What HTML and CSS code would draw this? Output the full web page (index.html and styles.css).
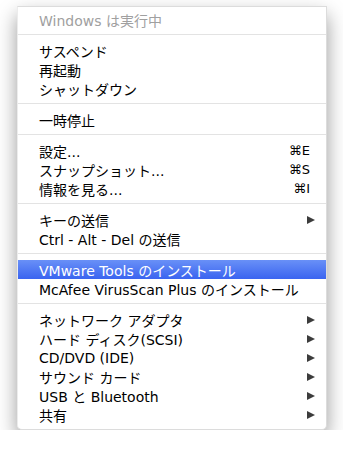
FILE: index.html
```html
<!DOCTYPE html>
<html lang="ja">

<head>
  <meta charset="UTF-8">
  <meta name="viewport" content="width=device-width, initial-scale=1.0">
  <title>Menu</title>
  <link rel="stylesheet" href="styles.css">
</head>

<body>
  <ul class="menu">
    <li class="item head">Windows は実行中</li>
    <li class="sep"></li>
    <li class="item">サスペンド</li>
    <li class="item">再起動</li>
    <li class="item">シャットダウン</li>
    <li class="sep"></li>
    <li class="item">一時停止</li>
    <li class="sep"></li>
    <li class="item">設定...<span class="key">⌘E</span></li>
    <li class="item">スナップショット...<span class="key">⌘S</span></li>
    <li class="item">情報を見る...<span class="key">⌘I</span></li>
    <li class="sep"></li>
    <li class="item sub">キーの送信</li>
    <li class="item">Ctrl - Alt - Del の送信</li>
    <li class="sep"></li>
    <li class="item active">VMware Tools のインストール</li>
    <li class="item">McAfee VirusScan Plus のインストール</li>
    <li class="sep"></li>
    <li class="item sub">ネットワーク アダプタ</li>
    <li class="item sub">ハード ディスク(SCSI)</li>
    <li class="item sub">CD/DVD (IDE)</li>
    <li class="item sub">サウンド カード</li>
    <li class="item sub">USB と Bluetooth</li>
    <li class="item sub">共有</li>
  </ul>
</body>

</html>
```

FILE: styles.css
```css
* {
  margin: 0;
  padding: 0;
  box-sizing: border-box;
}

body {
  background-color: #ffffff;
  font-family: "DejaVu Sans", "Noto Sans CJK JP", sans-serif;
  font-size: 14px;
  color: #000;
}

/* メニュー本体 */
.menu {
  list-style: none;
  width: 310px;
  margin: 6px 0 0 17px;
  padding: 3px 0 5px;
  background-color: #fff;
  border: 1px solid #dcdcdc;
  border-left-color: #ececec;
  border-radius: 0 0 5px 5px;
  box-shadow: 0 9px 20px rgba(0, 0, 0, 0.4);
}

.item {
  display: flex;
  align-items: center;
  justify-content: space-between;
  height: 19px;
  padding: 0 16px 0 21px;
  white-space: nowrap;
}

.head {
  color: #a0a0a0;
}

.key {
  font-size: 13px;
}

/* サブメニューの三角 */
.sub::after {
  content: "";
  width: 0;
  height: 0;
  margin-right: -5px;
  border-top: 4.5px solid transparent;
  border-bottom: 4.5px solid transparent;
  border-left: 8px solid #3c3c3c;
}

.active {
  color: #fff;
  background: linear-gradient(#6990f7, #3a64f0);
}

.sep {
  height: 1px;
  margin: 5px 0 6px;
  background-color: #e3e3e3;
}
```
